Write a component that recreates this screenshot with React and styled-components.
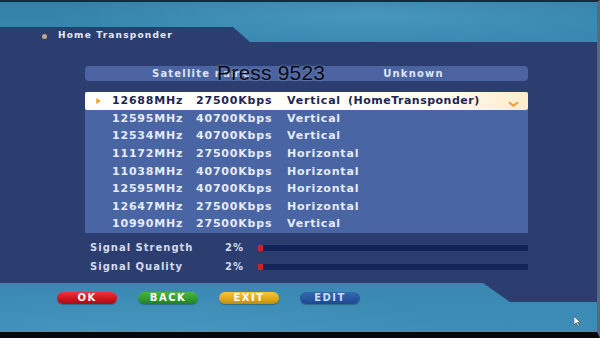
import React from "react";
import styled, { createGlobalStyle } from "styled-components";

const GlobalStyle = createGlobalStyle`
  html, body {
    margin: 0;
    padding: 0;
    background: #000;
  }
  body {
    font-family: "DejaVu Sans", "Liberation Sans", sans-serif;
  }
`;

const transponders = [
  { freq: "12688MHz", rate: "27500Kbps", pol: "Vertical", note: "(HomeTransponder)" },
  { freq: "12595MHz", rate: "40700Kbps", pol: "Vertical" },
  { freq: "12534MHz", rate: "40700Kbps", pol: "Vertical" },
  { freq: "11172MHz", rate: "27500Kbps", pol: "Horizontal" },
  { freq: "11038MHz", rate: "40700Kbps", pol: "Horizontal" },
  { freq: "12595MHz", rate: "40700Kbps", pol: "Horizontal" },
  { freq: "12647MHz", rate: "27500Kbps", pol: "Horizontal" },
  { freq: "10990MHz", rate: "27500Kbps", pol: "Vertical" }
];

const signals = [
  { label: "Signal Strength", value: 2 },
  { label: "Signal Quality", value: 2 }
];

const buttons = [
  { label: "OK", tone: "red" },
  { label: "BACK", tone: "green" },
  { label: "EXIT", tone: "yellow" },
  { label: "EDIT", tone: "blue" }
];

const tones = {
  red: "linear-gradient(#f0343c, #c8141e 60%, #a80c16)",
  green: "linear-gradient(#4cb444, #2f9a30 60%, #227c26)",
  yellow: "linear-gradient(#f4c438, #e0a818 60%, #c08a10)",
  blue: "linear-gradient(#3468ad, #2656a0 60%, #1e4888)"
};

const App = () => {
  return (
    <>
      <GlobalStyle />
      <Screen>
        <TopBand />
        <Panel>
          <TitleRow>
            <Bullet />
            <Title>Home Transponder</Title>
          </TitleRow>

          <Content>
            <SatelliteBar>
              <SatCell>Satellite name</SatCell>
              <SatCell>Unknown</SatCell>
              <Overlay>Press 9523</Overlay>
            </SatelliteBar>

            <List>
              {transponders.map((tp, i) => (
                <Row key={i} $selected={i === 0}>
                  {i === 0 && (
                    <Marker viewBox="0 0 6 8">
                      <polygon points="0,0 6,4 0,8" fill="#f0a020" />
                    </Marker>
                  )}
                  <Freq>{tp.freq}</Freq>
                  <Rate>{tp.rate}</Rate>
                  <Pol>{tp.pol}</Pol>
                  {tp.note && <Note>{tp.note}</Note>}
                  {i === 0 && (
                    <Chevron viewBox="0 0 12 6">
                      <polyline points="1,1 6,5 11,1" fill="none" stroke="#e8a030" strokeWidth="2" />
                    </Chevron>
                  )}
                </Row>
              ))}
            </List>

            <Signals>
              {signals.map((s) => (
                <SignalRow key={s.label}>
                  <SignalLabel>{s.label}</SignalLabel>
                  <SignalValue>{s.value}%</SignalValue>
                  <Bar>
                    <BarFill style={{ width: `${s.value}%` }} />
                  </Bar>
                </SignalRow>
              ))}
            </Signals>
          </Content>
        </Panel>

        <Footer>
          {buttons.map((b) => (
            <Pill key={b.label} $tone={b.tone}>
              {b.label}
            </Pill>
          ))}
          <Cursor viewBox="0 0 8 12">
            <polygon points="0,0 0,10 2.5,7.5 4.5,11.5 6,10.8 4,7 7.5,7" fill="#f4f4f4" stroke="#333" strokeWidth="0.6" />
          </Cursor>
        </Footer>
      </Screen>
    </>
  );
};

const Screen = styled.div`
  width: 600px;
  height: 338px;
  box-sizing: border-box;
  display: flex;
  flex-direction: column;
  overflow: hidden;
  border-top: 2px solid #17283f;
  border-bottom: 6px solid #05080d;
  border-right: 3px solid #59687f;
  background:
    radial-gradient(ellipse 420px 40px at 62% 14px, rgba(86, 166, 204, 0.55), transparent 75%),
    radial-gradient(ellipse 380px 60px at 25% 100%, rgba(80, 160, 200, 0.45), transparent 80%),
    linear-gradient(#3381a9, #3b8ab3 15%, #3a88b1 85%, #3d8db6);
`;

const TopBand = styled.div`
  height: 25px;
  flex-shrink: 0;
`;

const Panel = styled.div`
  height: 256px;
  flex-shrink: 0;
  display: flex;
  flex-direction: column;
  background: #2c3e6f;
  clip-path: polygon(0 0, 233px 0, 250px 15px, 100% 15px, 100% 100%, 0 100%);
`;

const TitleRow = styled.div`
  height: 16px;
  display: flex;
  align-items: center;
  gap: 11px;
  padding-left: 42px;
`;

const Bullet = styled.span`
  width: 5px;
  height: 5px;
  border-radius: 50%;
  background: #b9a889;
  margin-top: 3px;
`;

const Title = styled.span`
  color: #e4e9f4;
  font-size: 9px;
  font-weight: bold;
  letter-spacing: 1.2px;
`;

const Content = styled.div`
  display: flex;
  flex-direction: column;
  padding: 23px 69px 0 85px;
`;

const SatelliteBar = styled.div`
  position: relative;
  height: 15px;
  display: grid;
  grid-template-columns: 250px 1fr;
  align-items: center;
  background: #4b63a0;
  border-radius: 4px;
`;

const SatCell = styled.span`
  color: #dfe6f6;
  font-size: 10px;
  font-weight: bold;
  letter-spacing: 1.2px;
  text-align: center;
  &:first-child {
    text-align: left;
    padding-left: 67px;
  }
  &:nth-child(2) {
    padding-right: 36px;
  }
`;

const Overlay = styled.span`
  position: absolute;
  left: 132px;
  top: -5px;
  font-family: "Liberation Sans", Arial, sans-serif;
  font-size: 21px;
  color: #0a0a0f;
  letter-spacing: 0.2px;
  text-shadow: 0 0 3px rgba(120, 140, 190, 0.9);
`;

const List = styled.div`
  margin-top: 11px;
  height: 141px;
  display: flex;
  flex-direction: column;
  background: #4a65a3;
`;

const Row = styled.div`
  position: relative;
  height: 17.6px;
  flex-shrink: 0;
  display: flex;
  align-items: center;
  padding-left: 27px;
  font-size: 11px;
  font-weight: bold;
  letter-spacing: 0.8px;
  color: ${(p) => (p.$selected ? "#1c2654" : "#e6ebf7")};
  background: ${(p) =>
    p.$selected ? "linear-gradient(90deg, #ffffff 0%, #fffcf2 80%, #fbeccb 100%)" : "transparent"};
  border-radius: ${(p) => (p.$selected ? "2px" : "0")};
`;

const Marker = styled.svg`
  position: absolute;
  left: 11px;
  top: 6px;
  width: 5px;
  height: 6px;
`;

const Chevron = styled.svg`
  position: absolute;
  right: 9px;
  top: 9px;
  width: 11px;
  height: 6px;
`;

const Freq = styled.span`
  width: 84px;
  flex-shrink: 0;
`;

const Rate = styled.span`
  width: 91px;
  flex-shrink: 0;
`;

const Pol = styled.span`
  flex-shrink: 0;
`;

const Note = styled.span`
  margin-left: 7px;
  letter-spacing: 0.5px;
`;

const Signals = styled.div`
  margin-top: 5px;
  display: flex;
  flex-direction: column;
`;

const SignalRow = styled.div`
  height: 19px;
  display: flex;
  align-items: center;
  padding-left: 5px;
`;

const SignalLabel = styled.span`
  width: 135px;
  color: #d3dbee;
  font-size: 10px;
  font-weight: bold;
  letter-spacing: 1px;
`;

const SignalValue = styled.span`
  width: 33px;
  color: #d3dbee;
  font-size: 10px;
  font-weight: bold;
  letter-spacing: 1px;
`;

const Bar = styled.div`
  flex: 1;
  height: 6px;
  background: #132459;
  display: flex;
`;

const BarFill = styled.div`
  background: #c8242e;
`;

const Footer = styled.div`
  position: relative;
  flex: 1;
  display: flex;
  align-items: flex-start;
  gap: 21px;
  padding: 9px 0 0 57px;

  &::before {
    content: "";
    position: absolute;
    left: 0;
    right: 0;
    top: 0;
    height: 19px;
    background: #2c3e6f;
    clip-path: polygon(483px 0, 100% 0, 100% 100%, 510px 100%);
  }
`;

const Pill = styled.div`
  width: 60px;
  height: 12px;
  border-radius: 6px;
  background: ${(p) => tones[p.$tone]};
  color: ${(p) => (p.$tone === "blue" ? "#cfdcf6" : "#ffffff")};
  font-size: 10px;
  font-weight: bold;
  letter-spacing: 1.5px;
  display: flex;
  align-items: center;
  justify-content: center;
  line-height: 1;
  box-shadow: 0 1px 1px rgba(0, 0, 0, 0.25);
`;

const Cursor = styled.svg`
  position: absolute;
  left: 574px;
  top: 33px;
  width: 7px;
  height: 11px;
`;

export default App;
